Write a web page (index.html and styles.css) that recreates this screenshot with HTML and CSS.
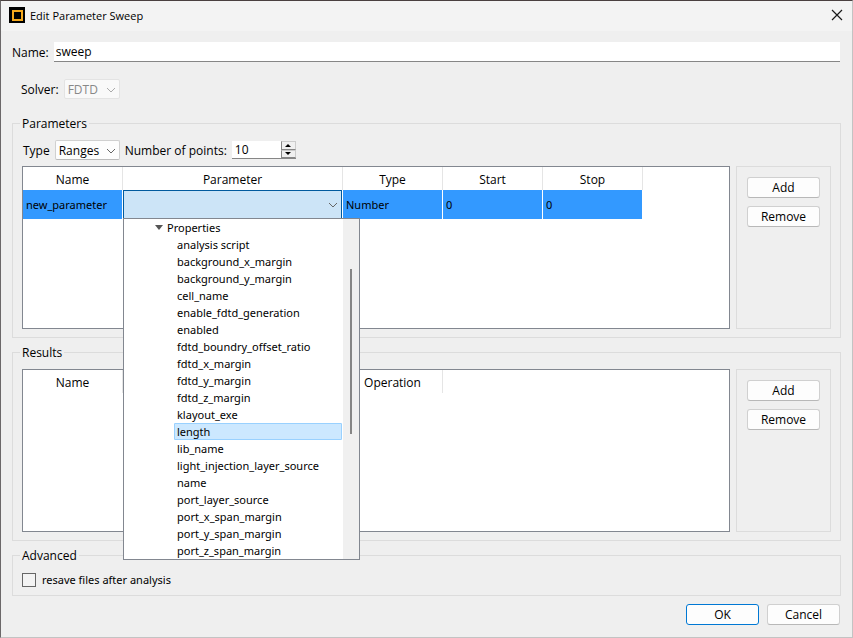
FILE: index.html
```html
<!DOCTYPE html>
<html lang="en">
<head>
  <meta charset="UTF-8" />
  <meta name="viewport" content="width=device-width, initial-scale=1.0"/>
  <title>Edit Parameter Sweep</title>
  <link rel="stylesheet" href="styles.css">
</head>
<body>
  <header class="titlebar">
    <svg class="app-icon" width="16" height="16" viewBox="0 0 16 16">
      <rect width="16" height="16" fill="#000"/>
      <rect x="4" y="4" width="9" height="9" fill="none" stroke="#f5a81c" stroke-width="2"/>
    </svg>
    <h1>Edit Parameter Sweep</h1>
    <button class="close" type="button" aria-label="Close">
      <svg width="12" height="12" viewBox="0 0 12 12"><path d="M1 1L11 11M11 1L1 11" stroke="#1a1a1a" stroke-width="1.2" fill="none"/></svg>
    </button>
  </header>

  <form class="dialog">
    <div class="name-row">
      <label for="name">Name:</label>
      <input type="text" id="name" value="sweep">
    </div>

    <div class="solver-row">
      <label for="solver">Solver:</label>
      <div class="combo disabled">
        <select id="solver" disabled><option>FDTD</option></select>
        <svg width="10" height="6" viewBox="0 0 10 6"><path d="M1 1L5 5L9 1"/></svg>
      </div>
    </div>

    <fieldset>
      <legend>Parameters</legend>
      <div class="options">
        <label for="type">Type</label>
        <div class="combo ranges">
          <select id="type"><option>Ranges</option><option>Values</option></select>
          <svg width="10" height="6" viewBox="0 0 10 6"><path d="M1 1L5 5L9 1"/></svg>
        </div>
        <label for="points">Number of points:</label>
        <div class="spin">
          <input type="text" id="points" value="10" inputmode="numeric">
          <div class="steps">
            <button type="button" aria-label="Increase"><svg width="6" height="3" viewBox="0 0 6 3"><path d="M0 3L3 0L6 3Z"/></svg></button>
            <button type="button" aria-label="Decrease"><svg width="6" height="3" viewBox="0 0 6 3"><path d="M0 0L3 3L6 0Z"/></svg></button>
          </div>
        </div>
      </div>
      <div class="panel">
        <div class="list">
          <table>
            <thead>
              <tr><th>Name</th><th class="wide">Parameter</th><th>Type</th><th>Start</th><th>Stop</th></tr>
            </thead>
            <tbody>
              <tr>
                <td>new_parameter</td>
                <td class="cell-combo">
                  <div class="combo open">
                    <select aria-label="Parameter"><option></option></select>
                    <svg width="10" height="6" viewBox="0 0 10 6"><path d="M1 1L5 5L9 1"/></svg>
                    <div class="popup">
                      <div class="tree">
                        <div class="group">
                          <svg width="8" height="5" viewBox="0 0 8 5"><path d="M0 0H8L4 5Z" fill="#555"/></svg>
                          Properties
                        </div>
                        <ul>
                          <li>analysis script</li>
                          <li>background_x_margin</li>
                          <li>background_y_margin</li>
                          <li>cell_name</li>
                          <li>enable_fdtd_generation</li>
                          <li>enabled</li>
                          <li>fdtd_boundry_offset_ratio</li>
                          <li>fdtd_x_margin</li>
                          <li>fdtd_y_margin</li>
                          <li>fdtd_z_margin</li>
                          <li>klayout_exe</li>
                          <li class="selected">length</li>
                          <li>lib_name</li>
                          <li>light_injection_layer_source</li>
                          <li>name</li>
                          <li>port_layer_source</li>
                          <li>port_x_span_margin</li>
                          <li>port_y_span_margin</li>
                          <li>port_z_span_margin</li>
                        </ul>
                      </div>
                      <div class="scrollbar"><div class="thumb"></div></div>
                    </div>
                  </div>
                </td>
                <td>Number</td>
                <td>0</td>
                <td>0</td>
              </tr>
            </tbody>
          </table>
        </div>
        <div class="actions">
          <button type="button">Add</button>
          <button type="button">Remove</button>
        </div>
      </div>
    </fieldset>

    <fieldset>
      <legend>Results</legend>
      <div class="panel">
        <div class="list">
          <table>
            <thead>
              <tr><th>Name</th><th class="wide"></th><th>Operation</th></tr>
            </thead>
          </table>
        </div>
        <div class="actions">
          <button type="button">Add</button>
          <button type="button">Remove</button>
        </div>
      </div>
    </fieldset>

    <fieldset class="advanced">
      <legend>Advanced</legend>
      <input type="checkbox" id="resave">
      <label for="resave">resave files after analysis</label>
    </fieldset>

    <div class="footer">
      <button type="submit" class="default">OK</button>
      <button type="button">Cancel</button>
    </div>
  </form>
</body>
</html>
```
FILE: styles.css
```css
* {
  box-sizing: border-box;
  margin: 0;
  padding: 0;
}

body {
  min-height: 100vh;
  display: flex;
  flex-direction: column;
  background: #efefef;
  border: 1px solid #c3c3c3;
  border-left-color: #6b6869;
  border-top-color: #4a4040;
  font-family: "Open Sans", "Noto Sans", sans-serif;
  font-size: 12px;
  line-height: 17px;
  color: #000;
}

input, select, button {
  font: inherit;
  color: inherit;
}

/* title bar */
.titlebar {
  height: 30px;
  display: flex;
  align-items: center;
  gap: 5px;
  padding: 0 9px 2px 8px;
  background: #f3f3f3;
}

.titlebar h1 {
  flex: 1;
  font-size: 11px;
  font-weight: normal;
}

.close {
  display: flex;
  border: none;
  background: none;
}

.dialog {
  flex: 1;
  display: flex;
  flex-direction: column;
  padding: 11px;
}

.name-row {
  display: flex;
  align-items: center;
  gap: 5px;
  padding-right: 1px;
}

.name-row input {
  flex: 1;
  height: 20px;
  padding: 0 2px;
  background: #fff;
  border: none;
  border-bottom: 1px solid #868686;
}

.solver-row {
  display: flex;
  align-items: center;
  gap: 5px;
  margin: 17px 0 16px 9px;
}

/* drop-downs */
.combo {
  position: relative;
  width: 56px;
  height: 20px;
}

.combo select {
  display: block;
  width: 100%;
  height: 100%;
  padding: 0 3px;
  appearance: none;
  background: #fdfdfd;
  border: 1px solid #d0d0d0;
  border-bottom-color: #bbb;
  border-radius: 2px;
}

.combo > svg {
  position: absolute;
  right: 4px;
  top: 8px;
  pointer-events: none;
  fill: none;
  stroke: #666;
}

.combo.ranges {
  width: 65px;
}

.combo.disabled select {
  background: #f9f9f9;
  border-color: #e3e3e3;
  color: #888;
  opacity: 1;
}

.combo.disabled svg {
  stroke: #aaa;
}

.combo.open {
  width: 100%;
  height: 29px;
}

.combo.open select {
  background: #cce4f7;
  border-color: #005a9e;
  border-radius: 0;
}

.combo.open > svg {
  top: 12px;
}

/* group boxes */
fieldset {
  border: 1px solid #dcdcdc;
  padding: 8px 9px;
  min-width: 0;
  margin-bottom: 6px;
}

legend {
  padding: 0 2px;
  margin-left: -2px;
}

.options {
  display: flex;
  align-items: center;
  gap: 5px;
  padding-left: 1px;
  margin-bottom: 6px;
}

.spin {
  display: flex;
  width: 64px;
  height: 18px;
  background: #fff;
  border-bottom: 1px solid #868686;
}

.spin input {
  flex: 1;
  min-width: 0;
  padding: 0 3px;
  border: none;
  background: none;
}

.steps {
  width: 15px;
  display: flex;
  flex-direction: column;
}

.steps button {
  flex: 1;
  display: flex;
  align-items: center;
  justify-content: center;
  background: #f0f0f0;
  border: 1px solid #ccc;
  border-left-color: #868686;
  border-bottom-color: #868686;
}

.panel {
  display: flex;
  gap: 6px;
}

.list {
  flex: 1;
  min-height: 163px;
  background: #fff;
  border: 1px solid #828790;
}

table {
  table-layout: fixed;
  border-collapse: separate;
  border-spacing: 0;
}

th {
  width: 100px;
  height: 23px;
  padding-top: 2px;
  font-weight: normal;
  border-right: 1px solid #e5e5e5;
}

th.wide {
  width: 220px;
}

td {
  height: 29px;
  padding: 0 3px;
  background: #3399ff;
  border-right: 1px solid #fff;
  font-family: "Noto Sans", sans-serif;
  font-size: 11px;
}

td.cell-combo {
  padding: 0;
}

.actions {
  width: 95px;
  display: flex;
  flex-direction: column;
  gap: 8px;
  padding: 10px;
  border: 1px solid #dcdcdc;
}

.actions button,
.footer button {
  width: 73px;
  height: 21px;
  background: #fdfdfd;
  border: 1px solid #d0d0d0;
  border-bottom-color: #b8b8b8;
  border-radius: 3px;
}

/* parameter tree */
.popup {
  position: absolute;
  top: 28px;
  left: 0;
  z-index: 1;
  width: 237px;
  display: flex;
  background: #fff;
  border: 1px solid #828790;
}

.tree {
  flex: 1;
}

.group {
  display: flex;
  align-items: center;
  gap: 4px;
  padding-left: 31px;
}

.tree ul {
  list-style: none;
  padding: 0 1px 0 50px;
}

.tree li {
  height: 17px;
  padding-left: 3px;
  white-space: nowrap;
}

.tree li.selected {
  background: #cce8ff;
  outline: 1px solid #99d1ff;
  outline-offset: -1px;
  border-radius: 1px;
}

.scrollbar {
  width: 16px;
  padding-top: 50px;
  background: #f0f0f0;
}

.thumb {
  width: 2px;
  height: 165px;
  margin-left: 7px;
  background: #868686;
}

.advanced {
  display: flex;
  align-items: center;
  gap: 6px;
  padding: 7px 9px;
}

.advanced label {
  font-family: "Noto Sans", sans-serif;
  font-size: 11px;
}

.advanced input {
  width: 14px;
  height: 14px;
  appearance: none;
  background: #f3f3f3;
  border: 1px solid #666;
}

.footer {
  display: flex;
  justify-content: flex-end;
  gap: 8px;
  padding: 2px 1px 0 0;
}

.footer .default {
  border-color: #0078d4;
}
```
